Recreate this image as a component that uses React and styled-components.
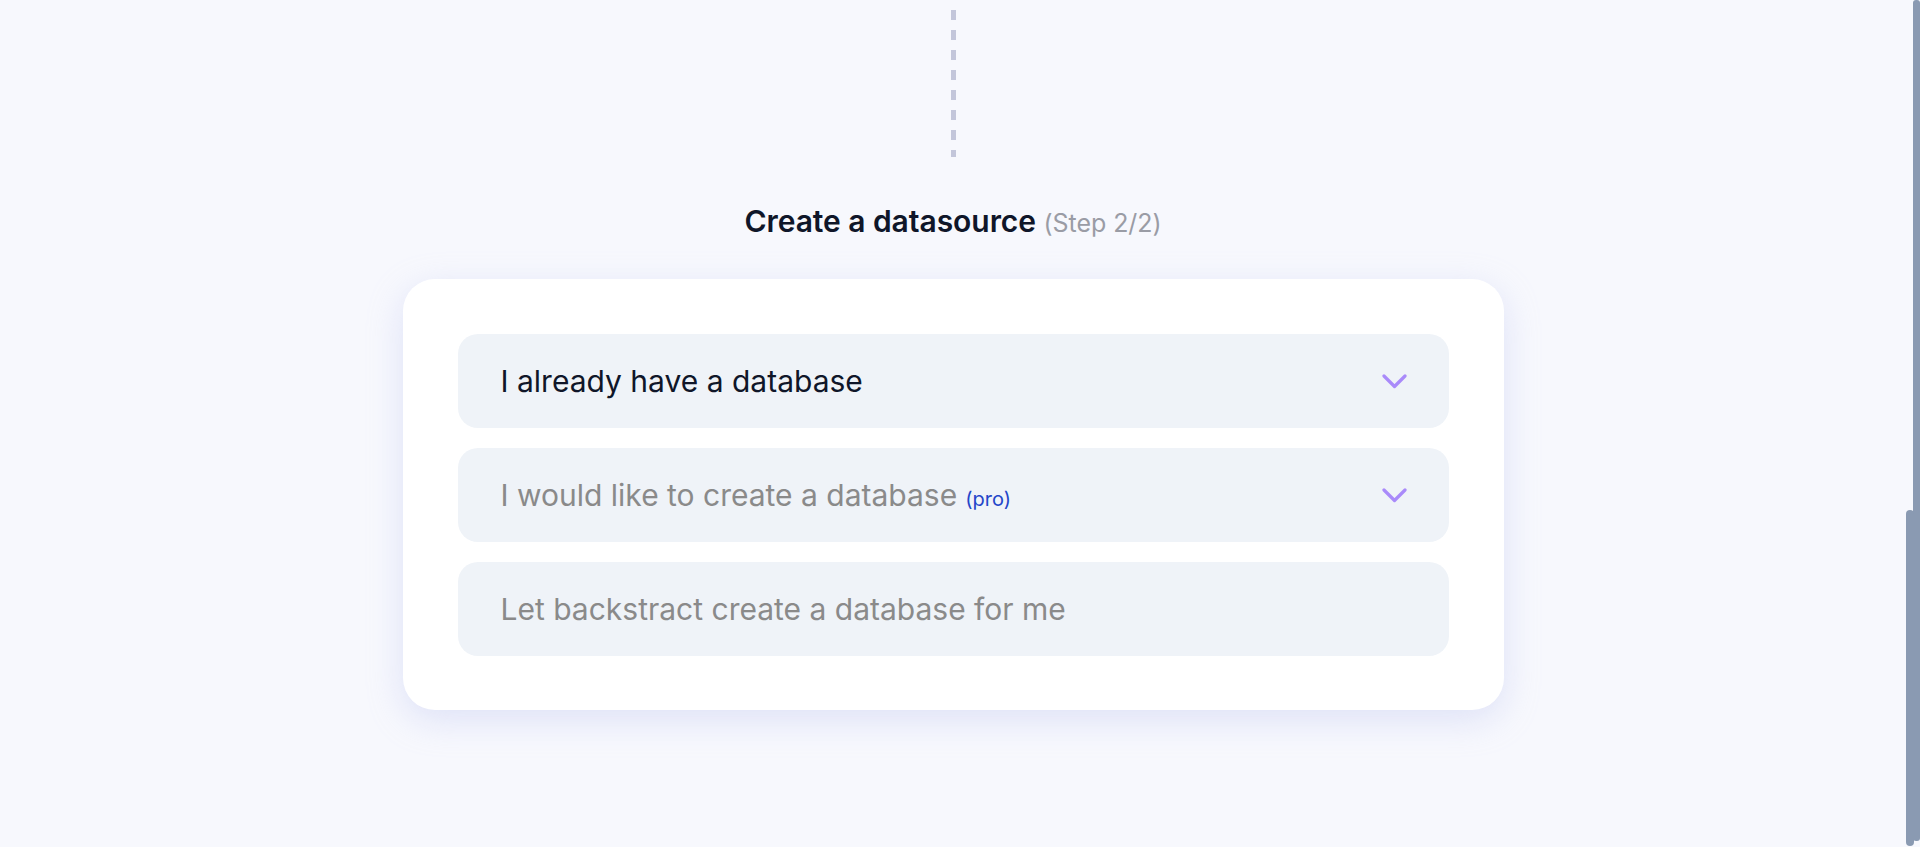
import React from "react";
import styled, { createGlobalStyle } from "styled-components";

const GlobalStyle = createGlobalStyle`
  html, body {
    margin: 0;
    padding: 0;
    height: 100%;
    overflow: hidden;
    background: #f7f8fd;
  }
  body {
    font-family: Inter, "Noto Sans", "Liberation Sans", sans-serif;
    -webkit-font-smoothing: antialiased;
  }
`;

const Page = styled.div`
  display: flex;
  height: 100vh;
  background: #f7f8fd;
`;

const Main = styled.main`
  flex: 1;
  display: flex;
  flex-direction: column;
  align-items: center;
`;

const DashedLine = styled.div`
  width: 5px;
  height: 157px;
  background: repeating-linear-gradient(
    to bottom,
    transparent 0,
    transparent 10px,
    #c3c6da 10px,
    #c3c6da 20px
  );
`;

const Title = styled.h2`
  margin: 46px 0 0;
  font-size: 30px;
  line-height: 36px;
  font-weight: 600;
  color: #0f1629;
  letter-spacing: -0.05px;
`;

const Step = styled.span`
  font-size: 25px;
  font-weight: 400;
  color: #9a9ca5;
`;

const Card = styled.section`
  margin-top: 38px;
  width: 1101px;
  box-sizing: border-box;
  padding: 55px 55px 54px;
  background: #ffffff;
  border-radius: 32px;
  box-shadow: 0 10px 34px rgba(188, 195, 240, 0.42);
  display: flex;
  flex-direction: column;
  gap: 20px;
`;

const Option = styled.div`
  height: 94px;
  box-sizing: border-box;
  padding: 0 42px 0 43px;
  border-radius: 20px;
  background: #eff3f8;
  display: flex;
  align-items: center;
  justify-content: space-between;
  cursor: pointer;
`;

const Label = styled.span`
  font-size: 30px;
  font-weight: 400;
  color: ${(props) => (props.$active ? "#0f1629" : "#8a8a8a")};
  white-space: nowrap;
`;

const Pro = styled.span`
  margin-left: 8px;
  font-size: 20px;
  color: #2446c9;
`;

const Chevron = styled.svg`
  width: 25px;
  height: 15px;
  flex: none;
`;

const ScrollColumn = styled.div`
  position: relative;
  width: 14px;
  flex: none;
`;

const Track = styled.div`
  position: absolute;
  right: 0;
  top: 0;
  width: 7px;
  height: 841px;
  border-radius: 3px;
  background: #8a9ab2;
`;

const Thumb = styled.div`
  position: absolute;
  left: 0;
  top: 510px;
  width: 8px;
  height: 336px;
  border-radius: 4px;
  background: #8a9ab2;
`;

const ChevronIcon = () => (
  <Chevron viewBox="0 0 25 15" fill="none">
    <path
      d="M2 2 L12.5 12.5 L23 2"
      stroke="#a98afa"
      strokeWidth="3.2"
      strokeLinecap="round"
      strokeLinejoin="round"
    />
  </Chevron>
);

const options = [
  { label: "I already have a database", active: true, chevron: true },
  { label: "I would like to create a database", pro: true, chevron: true },
  { label: "Let backstract create a database for me" },
];

const App = () => {
  return (
    <Page>
      <GlobalStyle />
      <Main>
        <DashedLine />
        <Title>
          Create a datasource <Step>(Step 2/2)</Step>
        </Title>
        <Card>
          {options.map((item) => (
            <Option key={item.label}>
              <Label $active={item.active}>
                {item.label}
                {item.pro && <Pro>(pro)</Pro>}
              </Label>
              {item.chevron && <ChevronIcon />}
            </Option>
          ))}
        </Card>
      </Main>
      <ScrollColumn>
        <Track />
        <Thumb />
      </ScrollColumn>
    </Page>
  );
};

export default App;
